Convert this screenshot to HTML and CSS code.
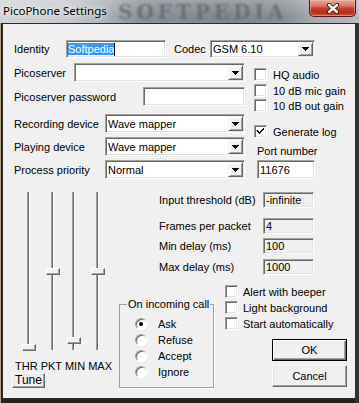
FILE: index.html
```html
<!DOCTYPE html>
<html>
<head>
<meta charset="utf-8">
<title>PicoPhone Settings</title>
<link rel="stylesheet" href="styles.css">
</head>
<body>
<div class="window">
  <div class="titlebar">
    <span class="title">PicoPhone Settings</span>
    <span class="watermark">SOFTPEDIA</span>
    <div class="close">
      <svg width="14" height="11" viewBox="0 0 14 11"><path d="M3 2 L11 9 M11 2 L3 9" stroke="#3a1a12" stroke-width="4.2" stroke-linecap="round" fill="none"/><path d="M3 2 L11 9 M11 2 L3 9" stroke="#fff" stroke-width="2.4" stroke-linecap="round" fill="none"/></svg>
    </div>
  </div>
  <div class="client">
    <div class="row1">
      <span class="lbl ident-lbl">Identity</span>
      <div class="edit ident"><span class="sel">Softpedia</span><span class="caret"></span></div>
      <span class="lbl codec-lbl">Codec</span>
      <div class="combo codec"><span class="val">GSM 6.10</span><span class="drop"><svg width="7" height="4" viewBox="0 0 7 4"><path d="M0 0h7v1h-1v1h-1v1h-1v1h-1v-1h-1v-1h-1v-1h-1z"/></svg></span></div>
    </div>

    <div class="upper">
      <div class="ucol">
        <div class="frow r-pico"><span class="lbl">Picoserver</span><div class="combo pico"><span class="val"></span><span class="drop"><svg width="7" height="4" viewBox="0 0 7 4"><path d="M0 0h7v1h-1v1h-1v1h-1v1h-1v-1h-1v-1h-1v-1h-1z"/></svg></span></div></div>
        <div class="frow r-pass"><span class="lbl">Picoserver password</span><div class="edit pass"></div></div>
        <div class="frow r-rec"><span class="lbl">Recording device</span><div class="combo dev"><span class="val">Wave mapper</span><span class="drop"><svg width="7" height="4" viewBox="0 0 7 4"><path d="M0 0h7v1h-1v1h-1v1h-1v1h-1v-1h-1v-1h-1v-1h-1z"/></svg></span></div></div>
        <div class="frow r-play"><span class="lbl">Playing device</span><div class="combo dev"><span class="val">Wave mapper</span><span class="drop"><svg width="7" height="4" viewBox="0 0 7 4"><path d="M0 0h7v1h-1v1h-1v1h-1v1h-1v-1h-1v-1h-1v-1h-1z"/></svg></span></div></div>
        <div class="frow r-proc"><span class="lbl">Process priority</span><div class="combo dev"><span class="val">Normal</span><span class="drop"><svg width="7" height="4" viewBox="0 0 7 4"><path d="M0 0h7v1h-1v1h-1v1h-1v1h-1v-1h-1v-1h-1v-1h-1z"/></svg></span></div></div>
      </div>
      <div class="rcol">
        <div class="chk c-hq"><span class="cb"></span><span>HQ audio</span></div>
        <div class="chk c-mic"><span class="cb"></span><span>10 dB mic gain</span></div>
        <div class="chk c-out"><span class="cb"></span><span>10 dB out gain</span></div>
        <div class="chk c-log"><span class="cb"><svg width="9" height="9" viewBox="0 0 9 9"><path d="M1 3h1v1h1v1h1v-1h1v-1h1v-1h1v-1h1v2h-1v1h-1v1h-1v1h-1v1h-1v-1h-1v-1h-1v-1h-1z"/></svg></span><span>Generate log</span></div>
        <div class="port-lbl">Port number</div>
        <div class="edit port"><span class="val">11676</span></div>
      </div>
    </div>

    <div class="lower">
      <div class="sliders">
        <div class="tracks">
          <div class="track"><div class="thumb" style="top:152px"></div></div>
          <div class="track"><div class="thumb" style="top:76px"></div></div>
          <div class="track t3"><div class="thumb" style="top:145px"></div></div>
          <div class="track"><div class="thumb" style="top:76px"></div></div>
        </div>
        <div class="slabels">THR PKT MIN MAX</div>
        <div class="btn tune">Tune</div>
      </div>
      <div class="lright">
        <div class="field f1"><span class="lbl">Input threshold (dB)</span><div class="edit ro"><span class="val">-infinite</span></div></div>
        <div class="field f2"><span class="lbl">Frames per packet</span><div class="edit ro"><span class="val">4</span></div></div>
        <div class="field f3"><span class="lbl">Min delay (ms)</span><div class="edit ro"><span class="val">100</span></div></div>
        <div class="field f4"><span class="lbl">Max delay (ms)</span><div class="edit ro"><span class="val">1000</span></div></div>
        <div class="bottom">
          <fieldset class="group">
            <legend>On incoming call</legend>
            <div class="radio r1"><span class="rb on"></span><span>Ask</span></div>
            <div class="radio"><span class="rb"></span><span>Refuse</span></div>
            <div class="radio"><span class="rb"></span><span>Accept</span></div>
            <div class="radio"><span class="rb"></span><span>Ignore</span></div>
          </fieldset>
          <div class="bright">
            <div class="chk low"><span class="cb"></span><span>Alert with beeper</span></div>
            <div class="chk low c2"><span class="cb"></span><span>Light background</span></div>
            <div class="chk low c2"><span class="cb"></span><span>Start automatically</span></div>
            <div class="btn ok">OK</div>
            <div class="btn cancel">Cancel</div>
          </div>
        </div>
      </div>
    </div>
  </div>
</div>
</body>
</html>
```
FILE: styles.css
```css
* { box-sizing: border-box; }
html, body { margin: 0; padding: 0; }
body {
  width: 359px;
  height: 403px;
  overflow: hidden;
  font-family: "Liberation Sans", Arial, sans-serif;
  font-size: 11px;
  color: #000;
  background: #2a231b;
}
.window {
  width: 359px;
  height: 403px;
  display: flex;
  flex-direction: column;
  background: linear-gradient(90deg, #b8a27e 0 1px, #231d16 1px 2px, #2a231b 2px 355px, #3a3128 355px);
}
.titlebar {
  height: 23px;
  flex: none;
  position: relative;
  display: flex;
  align-items: flex-start;
  padding-right: 3px;
  background:
    linear-gradient(180deg, rgba(255,255,255,.22), rgba(255,255,255,0) 70%),
    linear-gradient(90deg, #d2d5d8 0, #c5c9cd 70px, #a8aeb3 108px, #8a9096 140px, #80868c 230px, #8a9096 285px, #a6abb0 315px, #b7bbbf 359px);
}
.title {
  font-family: "Noto Sans", "Open Sans", sans-serif;
  font-size: 11.5px;
  line-height: 21px;
  padding-left: 3px;
  text-shadow: 0 0 5px #fff, 0 0 9px rgba(255,255,255,.8);
  position: relative;
  z-index: 1;
}
.watermark {
  position: absolute;
  left: 118px;
  top: 1px;
  font-family: "DejaVu Serif", serif;
  font-weight: bold;
  font-size: 20px;
  line-height: 22px;
  letter-spacing: 4px;
  color: #5c6268;
  filter: blur(1.2px);
  opacity: .7;
  white-space: nowrap;
}
.close {
  margin-left: auto;
  width: 47px;
  height: 17px;
  border: 1px solid #4a1d14;
  border-top: none;
  border-radius: 0 0 5px 5px;
  background: linear-gradient(180deg, #eaa898 0, #d97a66 35%, #c3391f 55%, #b3301a 80%, #cc5536 100%);
  box-shadow: inset 0 0 0 1px rgba(255,200,190,.45);
  display: flex;
  align-items: center;
  justify-content: center;
  position: relative;
  z-index: 1;
}
.client {
  flex: none;
  height: 376px;
  margin: 0 3px 0 2px;
  border: 1px solid #2c2c2c;
  background: #f0f0f0;
  position: relative;
  z-index: 1;
}
.lbl { white-space: nowrap; }

/* sunken controls */
.edit, .combo, .cb {
  background: #fff;
  border: 1px solid;
  border-color: #a0a0a0 #fff #fff #a0a0a0;
  box-shadow: inset 1px 1px 0 #696969, inset -1px -1px 0 #e3e3e3;
}
.edit { display: flex; align-items: center; }
.edit .val { padding-left: 2px; white-space: nowrap; }
.combo { display: flex; padding: 1px; }
.combo .val { flex: 1; padding-left: 1px; display: flex; align-items: center; white-space: nowrap; }
.drop {
  width: 15px;
  flex: none;
  background: #f0f0f0;
  border: 1px solid;
  border-color: #f0f0f0 #696969 #696969 #f0f0f0;
  box-shadow: inset 1px 1px 0 #fff, inset -1px -1px 0 #a0a0a0;
  display: flex;
  align-items: center;
  justify-content: center;
}
.cb {
  width: 13px;
  height: 13px;
  flex: none;
  display: flex;
  align-items: center;
  justify-content: center;
}

/* row 1 */
.row1 { display: flex; align-items: center; height: 18px; margin-top: 16px; padding-left: 11px; }
.ident-lbl { width: 52px; }
.ident { width: 100px; height: 18px; padding-left: 1px; }
.sel { background: #3399ff; color: #fff; line-height: 12px; height: 12px; }
.caret { width: 1px; height: 13px; background: #000; }
.codec-lbl { margin-left: 8px; width: 36px; }
.codec { width: 105px; height: 18px; }

/* upper */
.upper { display: flex; margin-top: 5px; }
.ucol { width: 231px; margin-left: 11px; display: flex; flex-direction: column; }
.frow { display: flex; align-items: center; justify-content: space-between; height: 19px; }
.r-pass { margin-top: 5px; }
.r-rec { margin-top: 8px; }
.r-play, .r-proc { margin-top: 4px; }
.pico { width: 171px; height: 19px; }
.pass { width: 102px; height: 19px; }
.dev { width: 140px; height: 19px; }
.rcol { margin-left: 9px; display: flex; flex-direction: column; }
.chk { display: flex; align-items: center; height: 13px; gap: 6px; white-space: nowrap; }
.c-hq { margin-top: 5px; }
.c-mic { margin-top: 3px; }
.c-out { margin-top: 2px; }
.c-log { margin-top: 13px; }
.port-lbl { margin-top: 7px; margin-left: 3px; height: 13px; line-height: 13px; }
.port { margin-top: 2px; margin-left: 3px; width: 58px; height: 19px; }

/* lower */
.lower { display: flex; margin-top: 13px; }
.sliders { width: 116px; flex: none; display: flex; flex-direction: column; }
.tracks { display: flex; height: 158px; padding-left: 24px; }
.track {
  position: relative;
  width: 3px;
  height: 158px;
  background: linear-gradient(90deg, #a0a0a0 0 1px, #696969 1px 2px, #fff 2px 3px);
}
.track + .track { margin-left: 21px; }
.track.t3 { margin-left: 18px; }
.thumb {
  position: absolute;
  left: -5px;
  width: 14px;
  height: 7px;
  background: #f0f0f0;
  border: 1px solid;
  border-color: #fff #696969 #696969 #fff;
  box-shadow: inset -1px -1px 0 #a0a0a0;
}
.slabels { margin-top: 10px; padding-left: 12px; height: 13px; line-height: 13px; white-space: nowrap; }
.btn {
  background: #f0f0f0;
  border: 1px solid;
  border-color: #fff #696969 #696969 #fff;
  box-shadow: inset -1px -1px 0 #a0a0a0, inset 1px 1px 0 #e3e3e3;
  display: flex;
  align-items: center;
  justify-content: center;
}
.tune { margin: 0 0 0 9px; width: 33px; height: 15px; font-size: 12px; line-height: 13px; }

.lright { flex: 1; display: flex; flex-direction: column; }
.field { display: flex; align-items: center; height: 16px; padding-left: 40px; }
.field .lbl { width: 104px; }
.edit.ro { width: 51px; height: 16px; background: #f0f0f0; }
.f2 { margin-top: 10px; }
.f3 { margin-top: 4px; }
.f4 { margin-top: 5px; }

.bottom { display: flex; }
.group {
  margin: 23px 0 0 0;
  width: 95px;
  height: 90px;
  min-width: 0;
  border: 1px solid #a0a0a0;
  box-shadow: 1px 1px 0 #fff;
  padding: 0;
}
.group legend { padding: 0 1px; margin-left: 7px; line-height: 13px; white-space: nowrap; }
.radio { display: flex; align-items: center; height: 16px; padding-left: 15px; gap: 11px; }
.radio.r1 { margin-top: 4px; height: 17px; }
.rb {
  width: 12px;
  height: 12px;
  flex: none;
  position: relative;
  border-radius: 50%;
  background: #fff;
  border: 1px solid;
  border-color: #a0a0a0 #fff #fff #a0a0a0;
  box-shadow: inset 1px 1px 0 #696969;
}
.rb.on::after {
  content: "";
  position: absolute;
  left: 3px;
  top: 3px;
  width: 4px;
  height: 4px;
  border-radius: 50%;
  background: #000;
}
.bright { flex: 1; margin: 10px 0 0 11px; display: flex; flex-direction: column; }
.chk.low { gap: 5px; }
.chk.c2 { margin-top: 3px; }
.ok {
  margin: 9px 0 0 47px;
  width: 75px;
  height: 22px;
  border: 1px solid #000;
  box-shadow: inset 1px 1px 0 #fff, inset -1px -1px 0 #696969, inset -2px -2px 0 #a0a0a0;
}
.cancel { margin: 4px 0 0 47px; width: 75px; height: 22px; }
```
